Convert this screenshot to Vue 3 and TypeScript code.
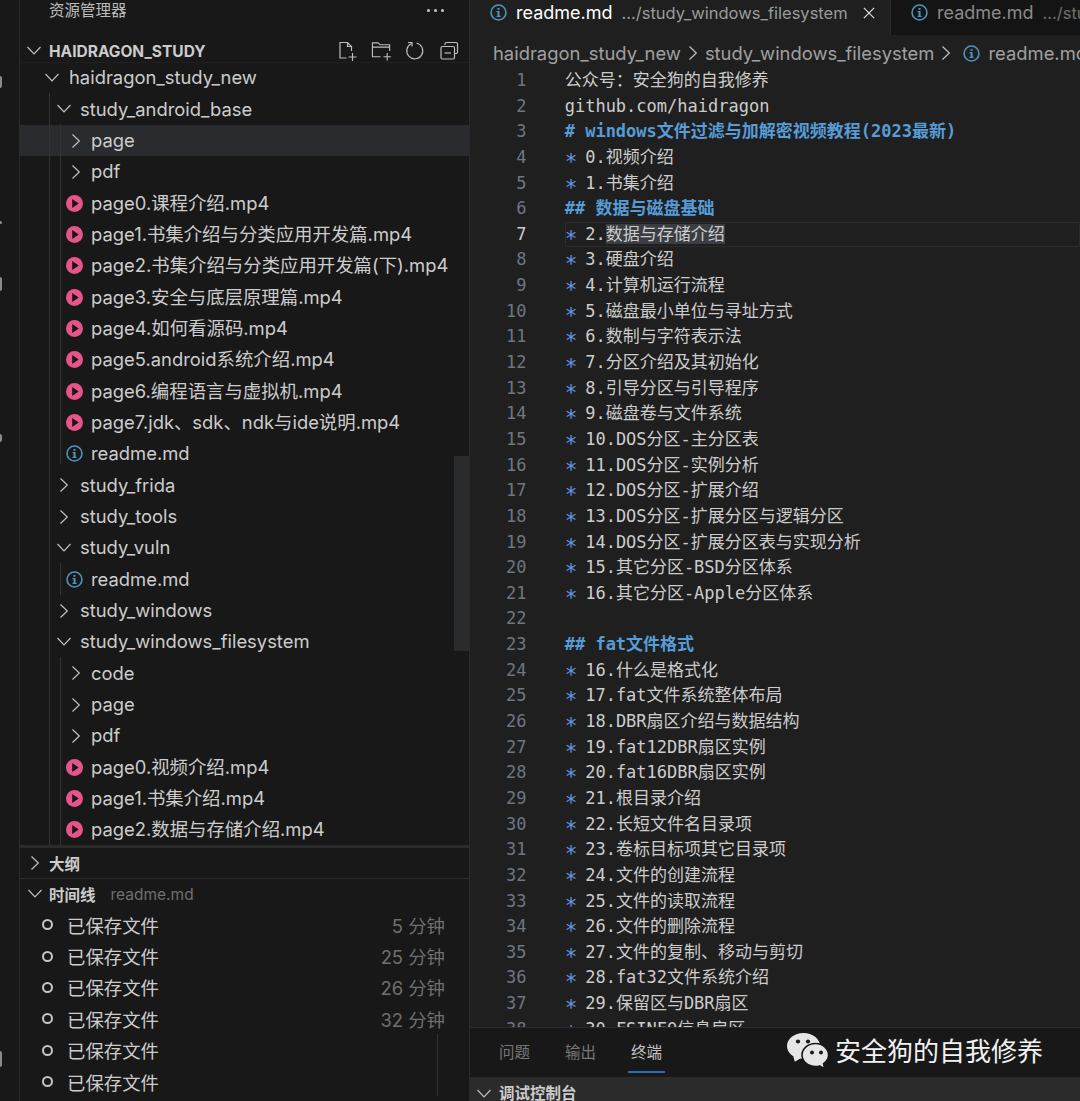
<template>
  <div class="window">
    <svg class="sprites" aria-hidden="true">
      <symbol id="info" viewBox="0 0 18 18">
        <circle cx="9" cy="9" r="7.900" fill="none" stroke="#4f93ba" stroke-width="1.700" />
        <path d="M6.900 7.400h3.200v5h1.100v1.300H6.900v-1.300h1.100V8.700H6.900zM7.900 4.200h2.200v2H7.900z" fill="#4f93ba" />
      </symbol>
      <symbol id="chev-down" viewBox="0 0 14 14">
        <path d="M0.500 3l6.500 6.800L13.500 3" fill="none" stroke="#c0c0c0" stroke-width="1.200" />
      </symbol>
      <symbol id="chev-right" viewBox="0 0 14 14">
        <path d="M3.500 0.500l6.800 6.500-6.800 6.500" fill="none" stroke="#c0c0c0" stroke-width="1.200" />
      </symbol>
    </svg>

    <aside class="activity">
      <span class="blip blip-a"></span>
      <span class="blip blip-b"></span>
      <span class="blip blip-c"></span>
      <span class="blip blip-d"></span>
      <span class="blip blip-e"></span>
    </aside>

    <section class="sidebar">
      <div class="view-title">
        <span>资源管理器</span>
        <span class="dots"><i></i><i></i><i></i></span>
      </div>

      <div class="root-head">
        <svg class="chev"><use href="#chev-down" /></svg>
        <strong>HAIDRAGON_STUDY</strong>
        <div class="root-actions">
          <svg viewBox="0 0 20 20">
            <path d="M9 17H2.500V1.500h7.500L14 5.500V10M10 1.500v4h4M11 16h8M15 12v8" />
          </svg>
          <svg viewBox="0 0 22 20">
            <path d="M10 16H1.500V1.500h6l2 2h10V10M1.500 6h18M13 16h8M17 12v8" />
          </svg>
          <svg viewBox="0 0 20 20">
            <path d="M6 2.500A8 8 0 1 0 11 2" />
            <path d="M2.500 1.500h4v4" />
          </svg>
          <svg viewBox="0 0 20 20">
            <path d="M5.500 4V3a1.500 1.500 0 0 1 1.500-1.500h9.500A1.500 1.500 0 0 1 18 3v8a1.500 1.500 0 0 1-1.500 1.500H15" />
            <rect x="1.500" y="5.500" width="13.500" height="12.500" rx="1.500" />
            <path d="M5 12h6.500" />
          </svg>
        </div>
      </div>

      <div class="tree">
        <span class="guide guide-outer"></span>
        <span class="guide guide-a"></span>
        <span class="guide guide-b"></span>
        <span class="guide guide-c"></span>
        <div
          v-for="(row, i) in tree"
          :key="i"
          class="row"
          :class="[`lvl-${row.level}`, { hover: row.hover, file: row.icon }]"
        >
          <svg v-if="row.open === true" class="chev"><use href="#chev-down" /></svg>
          <svg v-else-if="row.open === false" class="chev"><use href="#chev-right" /></svg>
          <svg v-else-if="row.icon === 'play'" class="file-icon" viewBox="0 0 16 16">
            <circle cx="8" cy="8" r="8" fill="#e5558a" />
            <path d="M5.800 3.800L12 8l-6.200 4.200z" fill="#181818" />
          </svg>
          <svg v-else class="file-icon"><use href="#info" /></svg>
          <span class="label">{{ row.name }}</span>
        </div>
      </div>

      <div class="pane-sep"></div>
      <div class="pane-head outline">
        <svg class="chev"><use href="#chev-right" /></svg>
        <strong>大纲</strong>
      </div>
      <div class="pane-head timeline">
        <svg class="chev"><use href="#chev-down" /></svg>
        <strong>时间线</strong>
        <span class="pane-file">readme.md</span>
      </div>
      <div class="timeline-list">
        <span class="time-guide"></span>
        <div v-for="(t, i) in times" :key="i" class="time-row">
          <span class="ring"></span>
          <span class="label">已保存文件</span>
          <span class="when">{{ t }}</span>
        </div>
      </div>
    </section>

    <main class="editor">
      <div class="tabs">
        <div class="tab active">
          <svg class="file-icon"><use href="#info" /></svg>
          <span class="tab-name">readme.md</span>
          <span class="tab-path">.../study_windows_filesystem</span>
          <svg class="close" viewBox="0 0 14 14"><path d="M1 1l12 12M13 1L1 13" /></svg>
        </div>
        <div class="tab">
          <svg class="file-icon"><use href="#info" /></svg>
          <span class="tab-name">readme.md</span>
          <span class="tab-path">.../study_windows_filesystem</span>
        </div>
      </div>

      <div class="crumbs">
        <span>haidragon_study_new</span>
        <svg class="chev"><use href="#chev-right" /></svg>
        <span>study_windows_filesystem</span>
        <svg class="chev"><use href="#chev-right" /></svg>
        <svg class="file-icon"><use href="#info" /></svg>
        <span>readme.md</span>
      </div>

      <div class="code">
        <div v-for="(line, i) in lines" :key="i" class="line" :class="{ current: i === 6 }">
          <span class="num">{{ i + 1 }}</span>
          <span class="src">
            <template v-if="line.startsWith('* ')">
              <span class="star">*</span> <span v-if="i === 6">2.<span class="sel">数据与存储介绍</span></span><span v-else>{{ line.slice(2) }}</span>
            </template>
            <span v-else-if="line.startsWith('#')" class="heading">{{ line }}</span>
            <span v-else>{{ line }}</span>
          </span>
        </div>
      </div>

      <div class="panel">
        <div class="panel-tabs">
          <span>问题</span>
          <span>输出</span>
          <span class="on">终端</span>
        </div>
        <div class="console-bar">
          <svg class="chev"><use href="#chev-down" /></svg>
          <strong>调试控制台</strong>
        </div>
      </div>
    </main>

    <div class="watermark">
      <svg viewBox="0 0 42 37" width="42" height="37">
        <path d="M16.500 0C7.400 0 0 5.800 0 13c0 4.200 2.500 7.900 6.300 10.300l1.500 5.400 5.400-3.100c1.100.2 2.200.4 3.300.4C25.600 26 33 20.200 33 13S25.600 0 16.500 0z" fill="#e6e6e6" />
        <circle cx="11" cy="8.500" r="2.100" fill="#1a1a1a" />
        <circle cx="21" cy="8.500" r="2.100" fill="#1a1a1a" />
        <path d="M28.500 10.500C21 10.500 15 15.600 15 22s6 11.500 13.500 11.500c1.500 0 2.900-.2 4.200-.6l4.800 3-.9-5.200c3-2.100 5-5.300 5-8.700 0-6.400-6-11.500-13.100-11.500z" fill="#e6e6e6" stroke="#181818" stroke-width="1.600" />
        <circle cx="25" cy="19.500" r="2" fill="#1a1a1a" />
        <circle cx="34" cy="19.500" r="2" fill="#1a1a1a" />
      </svg>
      <span>安全狗的自我修养</span>
    </div>
  </div>
</template>

<script setup lang="ts">
interface TreeRow {
  name: string
  level: number
  open?: boolean
  icon?: 'play' | 'info'
  hover?: boolean
}

const tree: TreeRow[] = [
  { name: 'haidragon_study_new', level: 0, open: true },
  { name: 'study_android_base', level: 1, open: true },
  { name: 'page', level: 2, open: false, hover: true },
  { name: 'pdf', level: 2, open: false },
  { name: 'page0.课程介绍.mp4', level: 2, icon: 'play' },
  { name: 'page1.书集介绍与分类应用开发篇.mp4', level: 2, icon: 'play' },
  { name: 'page2.书集介绍与分类应用开发篇(下).mp4', level: 2, icon: 'play' },
  { name: 'page3.安全与底层原理篇.mp4', level: 2, icon: 'play' },
  { name: 'page4.如何看源码.mp4', level: 2, icon: 'play' },
  { name: 'page5.android系统介绍.mp4', level: 2, icon: 'play' },
  { name: 'page6.编程语言与虚拟机.mp4', level: 2, icon: 'play' },
  { name: 'page7.jdk、sdk、ndk与ide说明.mp4', level: 2, icon: 'play' },
  { name: 'readme.md', level: 2, icon: 'info' },
  { name: 'study_frida', level: 1, open: false },
  { name: 'study_tools', level: 1, open: false },
  { name: 'study_vuln', level: 1, open: true },
  { name: 'readme.md', level: 2, icon: 'info' },
  { name: 'study_windows', level: 1, open: false },
  { name: 'study_windows_filesystem', level: 1, open: true },
  { name: 'code', level: 2, open: false },
  { name: 'page', level: 2, open: false },
  { name: 'pdf', level: 2, open: false },
  { name: 'page0.视频介绍.mp4', level: 2, icon: 'play' },
  { name: 'page1.书集介绍.mp4', level: 2, icon: 'play' },
  { name: 'page2.数据与存储介绍.mp4', level: 2, icon: 'play' }
]

const times = ['5 分钟', '25 分钟', '26 分钟', '32 分钟', '', '']

const lines = [
  '公众号：安全狗的自我修养',
  'github.com/haidragon',
  '# windows文件过滤与加解密视频教程(2023最新)',
  '* 0.视频介绍',
  '* 1.书集介绍',
  '## 数据与磁盘基础',
  '* 2.数据与存储介绍',
  '* 3.硬盘介绍',
  '* 4.计算机运行流程',
  '* 5.磁盘最小单位与寻址方式',
  '* 6.数制与字符表示法',
  '* 7.分区介绍及其初始化',
  '* 8.引导分区与引导程序',
  '* 9.磁盘卷与文件系统',
  '* 10.DOS分区-主分区表',
  '* 11.DOS分区-实例分析',
  '* 12.DOS分区-扩展介绍',
  '* 13.DOS分区-扩展分区与逻辑分区',
  '* 14.DOS分区-扩展分区表与实现分析',
  '* 15.其它分区-BSD分区体系',
  '* 16.其它分区-Apple分区体系',
  '',
  '## fat文件格式',
  '* 16.什么是格式化',
  '* 17.fat文件系统整体布局',
  '* 18.DBR扇区介绍与数据结构',
  '* 19.fat12DBR扇区实例',
  '* 20.fat16DBR扇区实例',
  '* 21.根目录介绍',
  '* 22.长短文件名目录项',
  '* 23.卷标目标项其它目录项',
  '* 24.文件的创建流程',
  '* 25.文件的读取流程',
  '* 26.文件的删除流程',
  '* 27.文件的复制、移动与剪切',
  '* 28.fat32文件系统介绍',
  '* 29.保留区与DBR扇区',
  '* 30.FSINFO信息扇区'
]
</script>

<style>
html,
body {
  margin: 0;
  background: #181818;
}
</style>

<style scoped>
.window {
  position: relative;
  display: flex;
  width: 1080px;
  height: 1101px;
  overflow: hidden;
  background: #181818;
  color: #cccccc;
  font-family: Inter, "Noto Sans CJK SC", sans-serif;
  font-size: 18.400px;
}

.sprites {
  position: absolute;
  width: 0;
  height: 0;
}

.activity {
  position: relative;
  flex: 0 0 19px;
  background: #181818;
  border-right: 1px solid #2b2b2b;
}

.blip {
  position: absolute;
  left: 0;
  width: 2px;
  background: #8a8a8a;
  border-radius: 0 2px 2px 0;
}
.blip-a { top: 76px; height: 12px; }
.blip-b { top: 221px; height: 3px; }
.blip-c { top: 277px; height: 14px; }
.blip-d { top: 434px; height: 8px; }
.blip-e { top: 1051px; height: 16px; }

.sidebar {
  flex: 0 0 449px;
  display: flex;
  flex-direction: column;
  min-width: 0;
  border-right: 1px solid #2b2b2b;
}

.chev {
  flex: none;
  width: 14px;
  height: 14px;
}

.view-title {
  display: flex;
  justify-content: space-between;
  height: 21px;
  padding: 0 25px 19px 29px;
  line-height: 21px;
  font-size: 15.500px;
  color: #bbbbbb;
}

.dots {
  display: flex;
  gap: 4px;
  align-items: center;
}
.dots i {
  width: 3px;
  height: 3px;
  border-radius: 50%;
  background: #c5c5c5;
}

.root-head {
  display: flex;
  align-items: center;
  height: 22px;
  padding-left: 7px;
  font-size: 15.500px;
  color: #cccccc;
}
.root-head .chev {
  margin-right: 8px;
}

.root-actions {
  display: flex;
  gap: 13px;
  margin-left: auto;
  margin-right: 9px;
}
.root-actions svg {
  width: 21px;
  height: 20px;
  fill: none;
  stroke: #bdbdbd;
  stroke-width: 1.200;
}

.tree {
  position: relative;
  flex: none;
  height: 783px;
  box-sizing: border-box;
  padding-top: 0.300px;
  overflow: hidden;
  box-shadow: inset 0 1px 0 #1f1f1f;
}
.tree::after {
  content: "";
  position: absolute;
  right: 0;
  top: 394px;
  width: 15px;
  height: 195px;
  background: #2a2b2d;
}

.guide {
  position: absolute;
  width: 1px;
  background: #333333;
  z-index: 1;
}
.guide-outer { left: 29px; top: 31px; bottom: 0; }
.guide-a { left: 40px; top: 62px; height: 340px; }
.guide-b { left: 40px; top: 501px; height: 32px; }
.guide-c { left: 40px; top: 595px; bottom: 0; }

.row {
  display: flex;
  align-items: center;
  height: 31.330px;
  line-height: 31.330px;
  white-space: nowrap;
  color: #cccccc;
}
.row.hover {
  background: #2a2b2e;
}
.row .chev {
  margin-right: 10px;
}
.lvl-0 { padding-left: 25px; }
.lvl-1 { padding-left: 37px; }
.lvl-2 { padding-left: 49px; }
.lvl-1 .chev { margin-right: 9px; }
.lvl-2 .chev { margin-right: 8px; }
.row.file { padding-left: 46px; }
.row .file-icon {
  margin-right: 8px;
}

.file-icon {
  flex: none;
  width: 17px;
  height: 17px;
}

.pane-sep {
  flex: none;
  height: 3px;
  background: #2b2b2b;
}

.pane-head {
  display: flex;
  align-items: center;
  padding-left: 8px;
  font-size: 15.500px;
  flex: none;
}
.pane-head .chev {
  margin-right: 7px;
}
.outline {
  height: 30px;
  border-bottom: 1px solid #2b2b2b;
}
.timeline {
  height: 30px;
}
.pane-file {
  margin-left: 15px;
  color: #6f6f6f;
}

.timeline-list {
  position: relative;
}
.time-guide {
  position: absolute;
  left: 417px;
  top: 125px;
  width: 1px;
  height: 62px;
  background: #333333;
}

.time-row {
  display: flex;
  align-items: center;
  height: 31.400px;
  padding: 0 24px 0 22px;
}
.ring {
  flex: none;
  width: 7px;
  height: 7px;
  margin-right: 14px;
  border: 2px solid #c5c5c5;
  border-radius: 50%;
}
.when {
  margin-left: auto;
  color: #6f6f6f;
}

.editor {
  flex: 1;
  min-width: 0;
  display: flex;
  flex-direction: column;
  background: #1f1f1f;
}

.tabs {
  flex: none;
  display: flex;
  height: 35px;
  background: #141414;
}
.tab {
  flex: none;
  display: flex;
  align-items: center;
  height: 25px;
  padding: 0 12px 10px 20px;
  white-space: nowrap;
  color: #8a8a8a;
  font-size: 18px;
}
.tab .file-icon {
  margin-right: 9px;
}
.tab.active {
  width: 388px;
  background: #1f1f1f;
  border-right: 1px solid #2b2b2b;
  color: #ffffff;
}
.tab-path {
  margin-left: 9px;
  font-size: 16.500px;
  color: #9a9a9a;
}
.tab:not(.active) .tab-path {
  color: #6f6f6f;
}
.close {
  width: 12px;
  height: 12px;
  margin-left: 15px;
  fill: none;
  stroke: #dddddd;
  stroke-width: 1.400;
}

.crumbs {
  flex: none;
  display: flex;
  align-items: center;
  gap: 5px;
  height: 26px;
  margin-top: 5px;
  padding-left: 23px;
  white-space: nowrap;
  color: #a0a0a0;
}
.crumbs .file-icon {
  margin: 0 3px 0 5px;
}

.code {
  flex: 1;
  min-height: 0;
  padding-top: 2px;
  overflow: hidden;
  font-family: "DejaVu Sans Mono", "Noto Sans CJK SC", monospace;
  font-size: 17px;
  color: #cccccc;
}

.line {
  display: flex;
  height: 25.650px;
  line-height: 25.650px;
  white-space: pre;
}
.num {
  flex: none;
  width: 56.500px;
  text-align: right;
  margin-right: 38.200px;
  color: #6e7681;
}
.src {
  flex: 1;
}
.star {
  display: inline-block;
  width: 10.240px;
  color: #6796e6;
  font-size: 21px;
  line-height: 1;
  vertical-align: -6px;
}
.heading {
  color: #569cd6;
  font-weight: 700;
}
.sel {
  background: #3a3d41;
}
.line.current .num {
  color: #cccccc;
}
.line.current .src {
  box-shadow: inset 0 0 0 1px #2b2b2b;
}

.panel {
  flex: none;
  height: 74px;
  box-sizing: border-box;
  display: flex;
  flex-direction: column;
  background: #181818;
  border-top: 1px solid #2b2b2b;
}
.panel-tabs {
  flex: none;
  display: flex;
  gap: 35px;
  height: 49px;
  padding-left: 29px;
  font-size: 15.500px;
  line-height: 50px;
  color: #777777;
}
.panel-tabs .on {
  height: 43px;
  margin: 0 -3px;
  padding: 0 3px;
  color: #c5c5c5;
  box-shadow: 0 2px 0 #2a6db5;
}
.console-bar {
  flex: 1;
  display: flex;
  align-items: center;
  padding: 10px 0 0 7px;
  background: #2b2b2b;
  font-size: 15.500px;
  line-height: 14px;
}
.console-bar .chev {
  margin-right: 8px;
}

.watermark {
  position: absolute;
  left: 787px;
  top: 1033px;
  display: flex;
  align-items: center;
  gap: 6px;
  font-size: 26px;
  line-height: 37px;
  color: #f2f2f2;
  white-space: nowrap;
}
</style>
